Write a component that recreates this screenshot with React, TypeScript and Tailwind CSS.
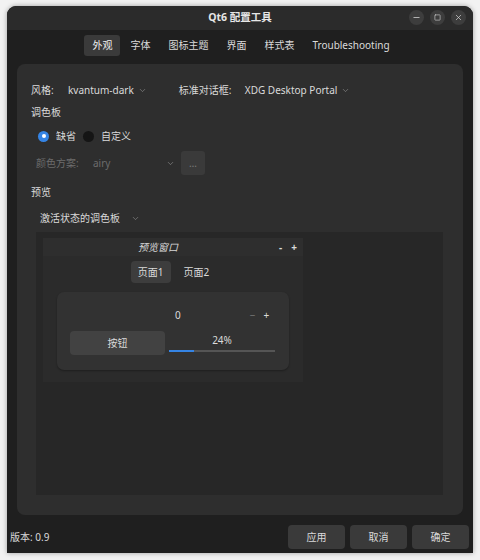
import { ChevronDown, Minus, Square, X } from "lucide-react";

const font = { fontFamily: '"Noto Sans", "Noto Sans CJK SC", sans-serif' };

function Chevron() {
  return <ChevronDown size={9} strokeWidth={1.5} className="text-[#9a9a9a]" />;
}

export default function App() {
  const tabs = ["外观", "字体", "图标主题", "界面", "样式表", "Troubleshooting"];

  return (
    <div className="w-[480px] h-[560px] bg-[#f2f2f2] pt-[6px] pl-[7px]" style={font}>
      <div className="w-[466px] h-[547px] rounded-t-[9px] bg-[#1f1f1f] flex flex-col overflow-hidden shadow-[0_0_5px_rgba(0,0,0,0.35)] text-[10px] text-[#dadada]">
        {/* title bar */}
        <div className="h-[24px] bg-[#2b2b2b] flex items-center relative shrink-0">
          <div className="flex-1 text-center font-bold text-[10.5px] text-[#e6e6e6]">Qt6 配置工具</div>
          <div className="absolute right-[7px] top-[4px] flex gap-[6px]">
            <div className="w-[15px] h-[15px] rounded-full bg-[#3d3d3d] flex items-center justify-center">
              <Minus size={9} strokeWidth={2} />
            </div>
            <div className="w-[15px] h-[15px] rounded-full bg-[#3d3d3d] flex items-center justify-center">
              <Square size={7} strokeWidth={2} />
            </div>
            <div className="w-[15px] h-[15px] rounded-full bg-[#3d3d3d] flex items-center justify-center">
              <X size={9} strokeWidth={1.8} />
            </div>
          </div>
        </div>

        {/* tabs */}
        <div className="flex justify-center pt-[5px] h-[34px] shrink-0">
          <div className="flex gap-[2px] h-[21px] ml-[2px]">
            {tabs.map((t, i) => (
              <div
                key={t}
                className={`px-[8px] flex items-center rounded-[3px] ${i === 0 ? "bg-[#3a3a3a] text-[#f0f0f0]" : "text-[#dadada]"}`}
              >
                {t}
              </div>
            ))}
          </div>
        </div>

        {/* main panel */}
        <div className="mx-[10px] h-[451px] rounded-[8px] bg-[#2e2e2e] px-[14px] pt-[16px] flex flex-col shrink-0">
          <div className="flex items-center h-[20px]">
            <span className="w-[37px]">风格:</span>
            <span>kvantum-dark</span>
            <span className="ml-[4px]"><Chevron /></span>
            <span className="ml-[32px] w-[66px]">标准对话框:</span>
            <span>XDG Desktop Portal</span>
            <span className="ml-[4px]"><Chevron /></span>
          </div>
          <div className="mt-[2px] h-[20px] flex items-center">调色板</div>
          <div className="mt-[4px] h-[20px] flex items-center pl-[7px]">
            <span className="w-[11px] h-[11px] rounded-full bg-[#3584e4] flex items-center justify-center">
              <span className="w-[4px] h-[4px] rounded-full bg-white" />
            </span>
            <span className="ml-[7px]">缺省</span>
            <span className="ml-[7px] w-[11px] h-[11px] rounded-full bg-[#151515]" />
            <span className="ml-[7px]">自定义</span>
          </div>
          <div className="mt-[5px] h-[24px] flex items-center pl-[5px] text-[#6c6c6c]">
            <span className="w-[57px]">颜色方案:</span>
            <span className="w-[73px]">airy</span>
            <Chevron />
            <div className="ml-[6px] w-[24px] h-[24px] rounded-[3px] bg-[#3a3a3a] flex items-center justify-center text-[#7a7a7a]">…</div>
          </div>
          <div className="mt-[7px] h-[20px] flex items-center">预览</div>
          <div className="mt-[6px] h-[20px] flex items-center pl-[9px]">
            <span>激活状态的调色板</span>
            <span className="ml-[11px]"><Chevron /></span>
          </div>

          {/* preview area */}
          <div className="mt-[4px] h-[263px] bg-[#272727] ml-[5px] mr-[6px] pt-[6px] pl-[7px]">
            <div className="w-[260px] h-[144px] bg-[#2b2b2b] flex flex-col">
              <div className="h-[18px] bg-[#2e2e2e] relative flex items-center justify-center">
                <span className="italic text-[#d6d6d6] mr-[30px]">预览窗口</span>
                <span className="absolute right-[6px] top-[2px] flex gap-[9px] font-bold">
                  <span>-</span>
                  <span>+</span>
                </span>
              </div>
              <div className="flex justify-center gap-[5px] mt-[5px] ml-[2px]">
                <div className="px-[7px] h-[22px] flex items-center rounded-[4px] bg-[#3d3d3d]">页面1</div>
                <div className="px-[8px] h-[22px] flex items-center">页面2</div>
              </div>
              <div className="mt-[9px] ml-[14px] w-[232px] h-[78px] rounded-[7px] bg-[#323232] shadow-[0_1px_2px_rgba(0,0,0,0.3)] px-[13px] pt-[13px]">
                <div className="flex items-center h-[20px]">
                  <span className="ml-[105px]">0</span>
                  <span className="ml-[69px] text-[#7a7a7a]">−</span>
                  <span className="ml-[8px]">+</span>
                </div>
                <div className="flex items-start mt-[6px]">
                  <div className="w-[95px] h-[24px] rounded-[4px] bg-[#424242] flex items-center justify-center">按钮</div>
                  <div className="ml-[4px] w-[106px] flex flex-col items-center">
                    <span className="h-[18px] flex items-center">24%</span>
                    <div className="w-full h-[2px] bg-[#555] mt-[1px]">
                      <div className="h-full bg-[#3584e4]" style={{ width: "24%" }} />
                    </div>
                  </div>
                </div>
              </div>
            </div>
          </div>
        </div>

        {/* footer */}
        <div className="flex items-center h-[24px] mt-[10px] pl-[3px] pr-[4px]">
          <span className="flex-1">版本: 0.9</span>
          <div className="flex gap-[5px]">
            {["应用", "取消", "确定"].map((b) => (
              <div key={b} className="w-[57px] h-[24px] rounded-[4px] bg-[#3a3a3a] flex items-center justify-center">
                {b}
              </div>
            ))}
          </div>
        </div>
      </div>
    </div>
  );
}
